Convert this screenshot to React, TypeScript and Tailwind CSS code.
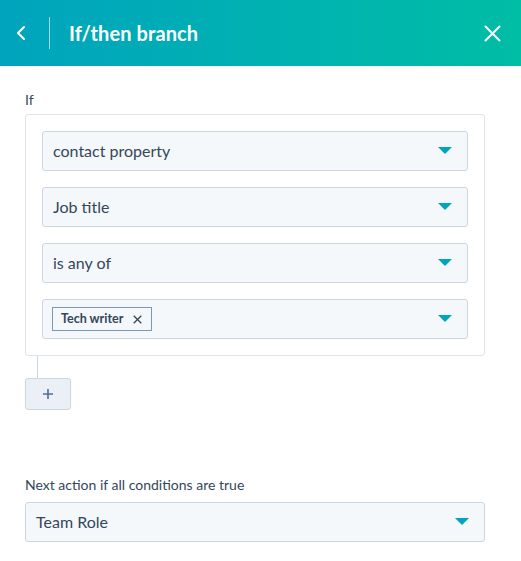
import React from "react";

const Caret = () => (
  <svg width="14" height="8" viewBox="0 0 14 8" className="shrink-0">
    <path d="M0 0 L14 0 L7 7 Z" fill="#00a4bd" />
  </svg>
);

const Select = ({ children }: { children: React.ReactNode }) => (
  <div className="flex h-[40px] items-center justify-between rounded-[3px] border border-[#cbd6e2] bg-[#f5f8fa] pl-[10px] pr-[15px] text-[16px] text-[#33475b]">
    <div className="flex items-center">{children}</div>
    <Caret />
  </div>
);

export default function App() {
  return (
    <div className="h-[561px] w-[521px] bg-white" style={{ fontFamily: "Lato, 'Open Sans', sans-serif" }}>
      <div className="flex h-[66px] items-center bg-gradient-to-r from-[#00a4bd] to-[#00bda5] text-white">
        <div className="flex w-[49px] items-center justify-center pr-[8px]">
          <svg width="10" height="16" viewBox="0 0 10 16">
            <path d="M8 2 L2 8 L8 14" stroke="white" strokeWidth="2" fill="none" strokeLinecap="round" strokeLinejoin="round" />
          </svg>
        </div>
        <div className="h-[32px] w-px bg-white/60" />
        <div className="ml-[19px] flex-1 text-[20px] font-bold tracking-[0.1px]">If/then branch</div>
        <div className="mr-[20px]">
          <svg width="17" height="17" viewBox="0 0 17 17">
            <path d="M1.5 1.5 L15.5 15.5 M15.5 1.5 L1.5 15.5" stroke="white" strokeWidth="2" strokeLinecap="round" />
          </svg>
        </div>
      </div>

      <div className="px-[25px] pt-[26px]">
        <div className="text-[14px] leading-[16px] text-[#33475b]">If</div>
        <div className="mr-[11px] mt-[6px] flex flex-col gap-[16px] rounded-[3px] border border-[#dfe3eb] px-[16px] py-[16px]">
          <Select>contact property</Select>
          <Select>Job title</Select>
          <Select>is any of</Select>
          <Select>
            <div className="-ml-[1px] flex h-[24px] items-center gap-[10px] border border-[#7c98b6] bg-[#f5f8fa] pl-[8px] pr-[9px] text-[12.5px] font-bold text-[#33475b]">
              <span>Tech writer</span>
              <svg width="9" height="9" viewBox="0 0 9 9">
                <path d="M0.7 0.7 L8.3 8.3 M8.3 0.7 L0.7 8.3" stroke="#33475b" strokeWidth="1.3" />
              </svg>
            </div>
          </Select>
        </div>
        <div className="ml-[12px] h-[22px] w-px bg-[#cbd6e2]" />
        <div className="flex h-[32px] w-[46px] items-center justify-center rounded-[3px] border border-[#cbd6e2] bg-[#eaf0f6]">
          <svg width="12" height="12" viewBox="0 0 12 12">
            <path d="M6 1 L6 11 M1 6 L11 6" stroke="#506e91" strokeWidth="1.6" />
          </svg>
        </div>

        <div className="mt-[67px] text-[14px] leading-[16px] text-[#33475b]">Next action if all conditions are true</div>
        <div className="mr-[11px] mt-[9px]">
          <Select>Team Role</Select>
        </div>
      </div>
    </div>
  );
}
